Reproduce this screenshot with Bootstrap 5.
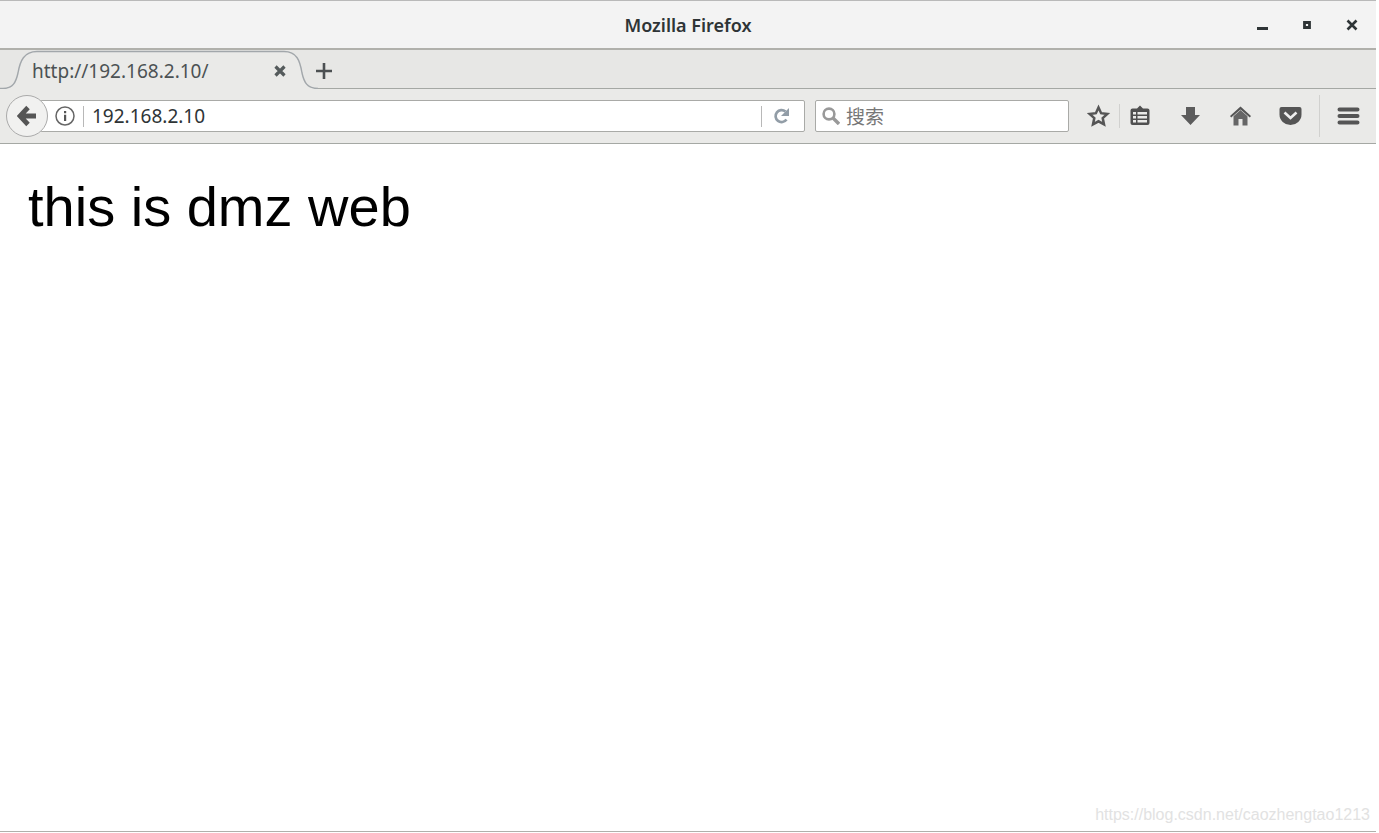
<!DOCTYPE html>
<html lang="zh-CN">
<head>
<meta charset="utf-8">
<meta name="viewport" content="width=device-width, initial-scale=1">
<title>Mozilla Firefox</title>
<link href="https://cdn.jsdelivr.net/npm/bootstrap@5.3.0/dist/css/bootstrap.min.css" rel="stylesheet">
<style>
  body { font-family: "Noto Sans", "Open Sans", "Noto Sans CJK SC", sans-serif; font-size: 19px; line-height: 24px; color: #2e3436; background: #fff; }
  .browser { margin-right: 3px; min-height: calc(100vh - 1px); border-bottom: 1px solid #b0b0ab; }
  button { padding: 0; border: 0; background: none; color: inherit; display: flex; align-items: center; justify-content: center; }
  svg { display: block; flex: none; }
  .title-bar { display: grid; grid-template-columns: 1fr auto 1fr; height: 50px; background: #f3f3f3; border-top: 1px solid #b9b9b9; border-bottom: 2px solid #b0b0ab; }
  .title-bar h1 { font-size: 18px; line-height: 24px; font-weight: 600; }
  .win-buttons { gap: 25px; padding-right: 14px; }
  .win-buttons button { width: 20px; height: 24px; }
  .tab-strip { height: 39px; background: linear-gradient(#e7e7e5 38px, #a5a8a4 38px); }
  .page-tab { width: 318px; }
  .tab-shape { left: 0; top: 0; }
  .tab-label { padding: 2px 27px 0 32px; color: #4c5254; }
  .new-tab { padding: 2px 0 0 1px; }
  .tool-bar { height: 55px; background: #eaeae8; border-bottom: 1px solid #a5a8a4; padding: 0 16px 0 6px; color: #555; }
  .back { width: 42px; height: 42px; border: 1px solid #aaa; border-radius: 50%; background: #f1f1f0; z-index: 1; }
  .field { height: 32px; background: #fff; border: 1px solid #a9aaa7; border-radius: 2px; }
  .address { margin-left: -8px; padding: 0 14px; }
  .field input { border: 0; outline: 0; padding: 0; background: none; min-width: 0; color: #2e3436; }
  .bar-line { width: 1px; height: 21px; background: #b8b8b8; }
  .reload { margin-left: 12px; }
  .search { width: 254px; margin-left: 10px; padding: 0 6px; }
  .search input { font-family: "Noto Sans CJK SC", sans-serif; margin-left: 6px; }
  .search input::placeholder { color: #777; opacity: 1; }
  .tools { padding-left: 18px; }
  .tools button { width: 24px; height: 28px; }
  .tools .bar-line { background: #d1d1cf; height: 24px; }
  .tools .spaced { margin-left: 26px; }
  .tools .menu-line { height: 42px; margin: 0 16px 0 17px; }
  .page h2 { font-family: "Liberation Sans", Arial, sans-serif; font-size: 56px; line-height: 64px; font-weight: 400; color: #000; padding: 31px 28px 0; }
  .watermark { font-family: "Liberation Sans", Arial, sans-serif; font-size: 16px; line-height: 20px; color: #e2e2e2; padding: 0 6px 6px; }
</style>
</head>
<body>
<div class="browser d-flex flex-column">
  <header class="title-bar align-items-center">
    <span></span>
    <h1 class="m-0">Mozilla Firefox</h1>
    <div class="win-buttons d-flex justify-content-end">
      <button type="button" aria-label="最小化"><svg width="12" height="14"><path d="M1 9h11v3H1z" fill="#2e3436"/></svg></button>
      <button type="button" aria-label="最大化"><svg width="10" height="10"><path d="M2.500 2.500h5v5h-5z" fill="none" stroke="#2e3436" stroke-width="2.800"/></svg></button>
      <button type="button" aria-label="关闭"><svg width="12" height="12"><path d="M1.500 1.500l9 9m0-9l-9 9" stroke="#2e3436" stroke-width="2.600"/></svg></button>
    </div>
  </header>
  <nav class="tab-strip d-flex" aria-label="标签页">
    <div class="page-tab position-relative">
      <svg class="tab-shape position-absolute" width="318" height="39"><path d="M0 38.500H3C13 38.500 16 32 18 23C20 11 24 1.500 37 1.500H284C297 1.500 300 11 302 23C304 32 307 38.500 318 38.500V39H0z" fill="#eaeae8"/><path d="M0 38.500H3C13 38.500 16 32 18 23C20 11 24 1.500 37 1.500H284C297 1.500 300 11 302 23C304 32 307 38.500 318 38.500" fill="none" stroke="#a2a7ab" stroke-width="1.400"/></svg>
      <div class="tab-label position-relative d-flex align-items-center h-100">
        <span class="flex-grow-1">http://192.168.2.10/</span>
        <button type="button" aria-label="关闭标签页"><svg width="22" height="22"><path d="M6.500 6.500l9 9m0-9l-9 9" stroke="#555b5c" stroke-width="3.200"/></svg></button>
      </div>
    </div>
    <button type="button" aria-label="新建标签页" class="new-tab h-100"><svg width="12" height="18" overflow="visible"><path d="M-3 9h16M5 1v16" stroke="#4c5052" stroke-width="2.600"/></svg></button>
  </nav>
  <div class="tool-bar d-flex align-items-center">
    <button type="button" class="back flex-shrink-0" aria-label="后退"><svg width="20" height="22"><path d="M11 2.500L3 11l8 8.500M4 11h15" fill="none" stroke="#555" stroke-width="4.800"/></svg></button>
    <div class="field address d-flex align-items-center flex-grow-1">
      <svg width="20" height="20"><circle cx="10" cy="10" r="9" fill="none" stroke="#666" stroke-width="1.500"/><path d="M9 5h2.200v2.200H9zM9 8.700h2.200V15H9z" fill="#555"/></svg>
      <span class="bar-line ms-2 me-2"></span>
      <input type="text" class="flex-grow-1" value="192.168.2.10" aria-label="地址">
      <span class="bar-line"></span>
      <button type="button" class="reload" aria-label="重新载入"><svg width="16" height="18" overflow="visible"><path d="M11.500 4.500A6 6 0 1 0 12.500 12.500" fill="none" stroke="#929da7" stroke-width="2.700"/><path d="M15 1v8H7z" fill="#929da7"/></svg></button>
    </div>
    <label class="field search d-flex align-items-center">
      <svg width="18" height="18"><circle cx="7" cy="7" r="5.400" fill="none" stroke="#999" stroke-width="2.600"/><path d="M11 11l6 6" stroke="#999" stroke-width="3.400"/></svg>
      <input type="text" class="w-100" placeholder="搜索" aria-label="搜索">
    </label>
    <div class="tools d-flex align-items-center">
      <button type="button" aria-label="收藏"><svg width="24" height="24"><path d="M11.500 3.500l2.600 5.700 6.200.7-4.600 4.200 1.300 6.300-5.500-3.100-5.500 3.100 1.300-6.300-4.600-4.200 6.200-.7z" fill="none" stroke="#555" stroke-width="2.500"/></svg></button>
      <span class="bar-line ms-2 me-2"></span>
      <button type="button" aria-label="书签"><svg width="24" height="24"><path d="M4.500 4.500H9L12 1.500l3 3h4.500a2 2 0 0 1 2 2V19a2 2 0 0 1-2 2h-15a2 2 0 0 1-2-2V6.500a2 2 0 0 1 2-2z" fill="#505050"/><path d="M5 8h3v2.500H5zM9.500 8H19v2.500H9.500zM5 12h3v2.500H5zM9.500 12H19v2.500H9.500zM5 16h3v2.500H5zM9.500 16H19v2.500H9.500z" fill="#eaeae8"/></svg></button>
      <button type="button" class="spaced" aria-label="下载"><svg width="24" height="24"><path d="M8 3h9v8h5l-9.500 10L3 11h5z" fill="#5c5c5c"/></svg></button>
      <button type="button" class="spaced" aria-label="主页"><svg width="24" height="24"><path d="M12.500 2.500L23 12l-1.200 1.500-9.300-8-9.300 8L2 12z" fill="#555"/><path d="M12.500 6l7 6.200V21.500h-5V15h-4v6.500h-5v-9.300z" fill="#666"/></svg></button>
      <button type="button" class="spaced" aria-label="Pocket"><svg width="24" height="24"><path d="M3.500 3h18a2 2 0 0 1 2 2v5.500a11 10.500 0 0 1-22 0V5a2 2 0 0 1 2-2z" fill="#555"/><path d="M6.500 8.500l6 5.500 6-5.500" fill="none" stroke="#eee" stroke-width="2.600"/></svg></button>
      <span class="bar-line menu-line"></span>
      <button type="button" aria-label="菜单"><svg width="24" height="24"><path d="M3.500 5.500h18M3.500 12h18M3.500 18.500h18" stroke="#555" stroke-width="4" stroke-linecap="round"/></svg></button>
    </div>
  </div>
  <main class="page flex-grow-1 d-flex flex-column justify-content-between">
    <h2 class="m-0">this is dmz web</h2>
    <div class="watermark text-end">https://blog.csdn.net/caozhengtao1213</div>
  </main>
</div>
<script src="https://cdn.jsdelivr.net/npm/bootstrap@5.3.0/dist/js/bootstrap.bundle.min.js"></script>
</body>
</html>
